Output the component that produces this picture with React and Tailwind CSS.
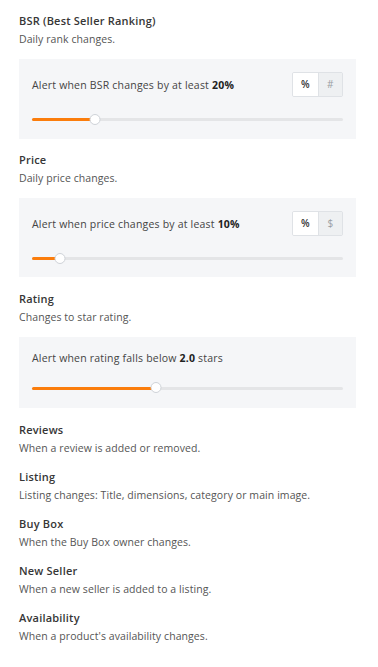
import React from "react";

function Slider({ pct }) {
  return (
    <div className="relative h-[12px] w-full">
      <div className="absolute left-0 right-0 top-[5px] h-[3px] rounded-full bg-[#e4e5e7]" />
      <div
        className="absolute left-0 top-[5px] h-[3px] rounded-full bg-[#fb7d0c]"
        style={{ width: `${pct}%` }}
      />
      <div
        className="absolute top-[0.5px] h-[11px] w-[11px] -translate-x-1/2 rounded-full border border-[#cfd3d8] bg-white"
        style={{ left: `${pct}%` }}
      />
    </div>
  );
}

function Toggle({ alt }) {
  return (
    <div className="flex h-[25px] w-[51px] overflow-hidden rounded-[2px] border border-[#dfe2e6]">
      <div className="flex w-1/2 items-center justify-center bg-white text-[10px] font-semibold text-[#333]">%</div>
      <div className="flex w-1/2 items-center justify-center border-l border-[#dfe2e6] bg-[#eef0f2] text-[10px] text-[#9a9ea3]">{alt}</div>
    </div>
  );
}

function Header({ title, desc }) {
  return (
    <div>
      <div className="text-[11px] font-semibold leading-[14px] tracking-[0.2px] text-[#363636]">{title}</div>
      <div className="mt-[4px] text-[10.5px] leading-[14px] tracking-[0.08px] text-[#555]">{desc}</div>
    </div>
  );
}

export default function App() {
  const list = [
    ["Reviews", "When a review is added or removed."],
    ["Listing", "Listing changes: Title, dimensions, category or main image."],
    ["Buy Box", "When the Buy Box owner changes."],
    ["New Seller", "When a new seller is added to a listing."],
    ["Availability", "When a product's availability changes."],
  ];
  return (
    <div
      className="min-h-[667px] w-[378px] bg-white pl-[19px] pr-[22px] pt-[13.5px]"
      style={{ fontFamily: "'Open Sans', Lato, sans-serif" }}
    >
      <Header title="BSR (Best Seller Ranking)" desc="Daily rank changes." />
      <div className="mt-[13px] bg-[#f5f6f8] px-[13px] pb-[14px] pt-[13.5px]">
        <div className="flex items-center justify-between">
          <div className="text-[10.5px] leading-[14px] tracking-[0.2px] text-[#444]">
            Alert when BSR changes by at least <span className="font-bold text-[#222]">20%</span>
          </div>
          <Toggle alt="#" />
        </div>
        <div className="mt-[16px]">
          <Slider pct={20.4} />
        </div>
      </div>

      <div className="mt-[14px]">
        <Header title="Price" desc="Daily price changes." />
      </div>
      <div className="mt-[13px] bg-[#f5f6f8] px-[13px] pb-[13px] pt-[13px]">
        <div className="flex items-center justify-between">
          <div className="text-[10.5px] leading-[14px] tracking-[0.2px] text-[#444]">
            Alert when price changes by at least <span className="font-bold text-[#222]">10%</span>
          </div>
          <Toggle alt="$" />
        </div>
        <div className="mt-[16px]">
          <Slider pct={9} />
        </div>
      </div>

      <div className="mt-[14.5px]">
        <Header title="Rating" desc="Changes to star rating." />
      </div>
      <div className="mt-[13px] bg-[#f5f6f8] px-[13px] pb-[14px] pt-[14px]">
        <div className="text-[10.5px] leading-[14px] tracking-[0.2px] text-[#444]">
          Alert when rating falls below <span className="font-bold text-[#222]">2.0</span> stars
        </div>
        <div className="mt-[17px]">
          <Slider pct={40} />
        </div>
      </div>

      <div className="flex flex-col gap-[15px] pt-[15px]">
        {list.map(([t, d]) => (
          <Header key={t} title={t} desc={d} />
        ))}
      </div>
    </div>
  );
}
